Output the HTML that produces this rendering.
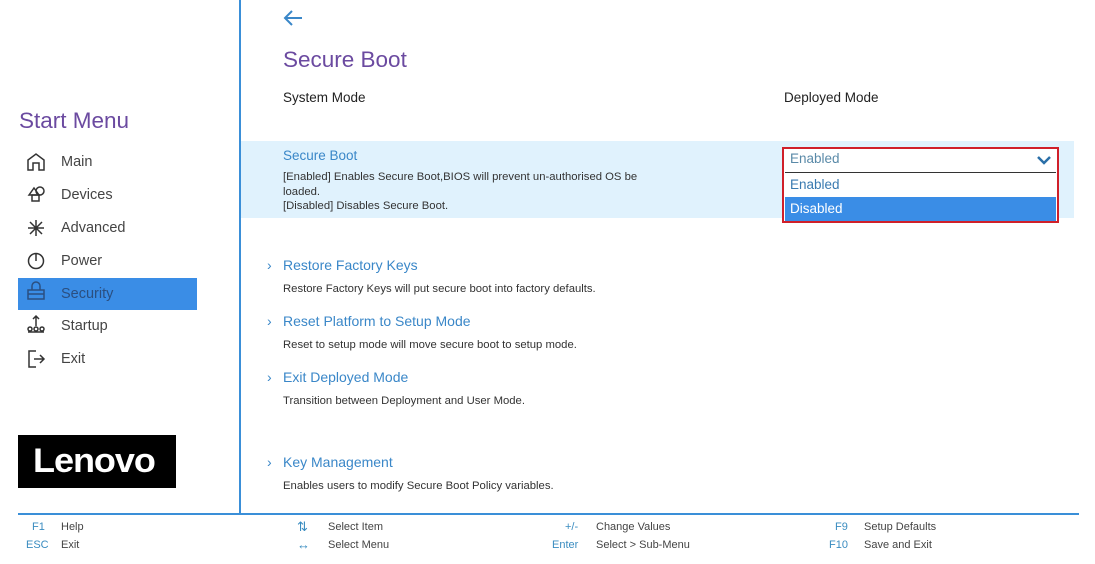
<!DOCTYPE html>
<html><head><style>
*{margin:0;padding:0;box-sizing:border-box}
body{width:1095px;height:564px;background:#fff;position:relative;overflow:hidden;font-family:"Liberation Sans","DejaVu Sans",sans-serif;color:#333}
.a{position:absolute;white-space:nowrap}
.menu{font-size:14.5px;color:#444}
.desc{font-size:11.3px;color:#333}
.link{font-size:14px;color:#3a87c8}
.ar{font-size:14px;color:#3a87c8}
.ft{font-size:11px;color:#444}
.fk{font-size:11px;color:#3a8cc0}
svg{position:absolute}
</style></head><body>
<div class="a" style="left:239px;top:0;width:2px;height:514px;background:#3a8fd8"></div>
<div class="a" style="left:18px;top:513px;width:1061px;height:2px;background:#3a8fd8"></div>

<svg style="left:282px;top:8px" width="22" height="20" viewBox="0 0 22 20"><path d="M20 10H3M10 3L3 10L10 17" stroke="#3a87c8" stroke-width="2" fill="none"/></svg>
<div class="a" style="left:283px;top:47px;font-size:22.5px;color:#6b4aa0">Secure Boot</div>
<div class="a" style="left:283px;top:90px;font-size:13.5px;color:#222">System Mode</div>
<div class="a" style="left:784px;top:90px;font-size:13.5px;color:#222">Deployed Mode</div>

<div class="a" style="left:19px;top:108px;font-size:22.5px;color:#6b4aa0">Start Menu</div>
<div class="a" style="left:18px;top:278px;width:179px;height:32px;background:#3a8de6"></div>
<div class="a menu" style="left:61px;top:154px">Main</div>
<div class="a menu" style="left:61px;top:187px">Devices</div>
<div class="a menu" style="left:61px;top:220px">Advanced</div>
<div class="a menu" style="left:61px;top:253px">Power</div>
<div class="a menu" style="left:61px;top:286px;color:#2b4f80">Security</div>
<div class="a menu" style="left:61px;top:318px">Startup</div>
<div class="a menu" style="left:61px;top:351px">Exit</div>
<svg style="left:26px;top:152px" width="20" height="220" viewBox="0 0 20 220" fill="none" stroke="#333" stroke-width="1.5">
<path d="M2 18V8L10 2L18 8V18H13V11H7V18Z"/>
<path d="M3 43L8 36L13 43Z"/><circle cx="14" cy="39" r="4"/><rect x="6" y="43" width="7" height="6"/>
<path d="M10 68v16M2 76h16M4 70l12 12M16 70L4 82"/>
<circle cx="10" cy="109" r="7.5"/><path d="M10 101v8"/>
<rect x="2" y="138" width="16" height="9" stroke="#2b4f80"/><path d="M6 138v-4a4 4 0 0 1 8 0v4M2 142h16" stroke="#2b4f80"/>
<path d="M10 164v10M7 167l3-3 3 3M2 180h16"/><circle cx="4" cy="177" r="2"/><circle cx="10" cy="177" r="2"/><circle cx="16" cy="177" r="2"/>
<path d="M10 199H3V215H10M8 207H18M14 203l4 4-4 4"/>
</svg>

<div class="a" style="left:18px;top:435px;width:158px;height:53px;background:#000"></div>
<div class="a" style="left:33px;top:442px;font-size:34px;color:#fff;font-weight:bold;letter-spacing:-1px;transform:scaleX(1.06);transform-origin:left">Lenovo</div>

<div class="a" style="left:241px;top:141px;width:833px;height:77px;background:#e0f2fd"></div>
<div class="a" style="left:283px;top:148px;font-size:13.5px;color:#3a87c8">Secure Boot</div>
<div class="a desc" style="left:283px;top:170px;line-height:14.5px;white-space:normal;width:388px">[Enabled] Enables Secure Boot,BIOS will prevent un-authorised OS be loaded.<br>[Disabled] Disables Secure Boot.</div>

<div class="a" style="left:782px;top:147px;width:277px;height:76px;border:2px solid #d0202a;background:#fff"></div>
<div class="a" style="left:785px;top:172px;width:271px;height:1px;background:#333"></div>
<div class="a" style="left:785px;top:197px;width:271px;height:24px;background:#3a8de6"></div>
<div class="a" style="left:790px;top:151px;font-size:13.5px;color:#5a8aa8">Enabled</div>
<div class="a" style="left:790px;top:177px;font-size:13.5px;color:#3a7ab0">Enabled</div>
<div class="a" style="left:790px;top:201px;font-size:13.5px;color:#fff">Disabled</div>
<svg style="left:1036px;top:154px" width="16" height="12" viewBox="0 0 16 12"><path d="M2 3l6 6 6-6" stroke="#2a6fa8" stroke-width="2.5" fill="none"/></svg>

<div class="a ar" style="left:267px;top:257px">›</div><div class="a link" style="left:283px;top:257px">Restore Factory Keys</div>
<div class="a desc" style="left:283px;top:283px">Restore Factory Keys will put secure boot into factory defaults.</div>
<div class="a ar" style="left:267px;top:313px">›</div><div class="a link" style="left:283px;top:313px">Reset Platform to Setup Mode</div>
<div class="a desc" style="left:283px;top:339px">Reset to setup mode will move secure boot to setup mode.</div>
<div class="a ar" style="left:267px;top:369px">›</div><div class="a link" style="left:283px;top:369px">Exit Deployed Mode</div>
<div class="a desc" style="left:283px;top:395px">Transition between Deployment and User Mode.</div>
<div class="a ar" style="left:267px;top:454px">›</div><div class="a link" style="left:283px;top:454px">Key Management</div>
<div class="a desc" style="left:283px;top:480px">Enables users to modify Secure Boot Policy variables.</div>

<div class="a fk" style="left:32px;top:521px">F1</div><div class="a ft" style="left:61px;top:521px">Help</div>
<div class="a fk" style="left:26px;top:539px">ESC</div><div class="a ft" style="left:61px;top:539px">Exit</div>
<div class="a fk" style="left:297px;top:519px;font-size:13px">⇅</div><div class="a ft" style="left:328px;top:521px">Select Item</div>
<div class="a fk" style="left:297px;top:537px;font-size:13px">↔</div><div class="a ft" style="left:328px;top:539px">Select Menu</div>
<div class="a fk" style="left:565px;top:521px">+/-</div><div class="a ft" style="left:596px;top:521px">Change Values</div>
<div class="a fk" style="left:552px;top:539px">Enter</div><div class="a ft" style="left:596px;top:539px">Select &gt; Sub-Menu</div>
<div class="a fk" style="left:835px;top:521px">F9</div><div class="a ft" style="left:864px;top:521px">Setup Defaults</div>
<div class="a fk" style="left:829px;top:539px">F10</div><div class="a ft" style="left:864px;top:539px">Save and Exit</div>
</body></html>
